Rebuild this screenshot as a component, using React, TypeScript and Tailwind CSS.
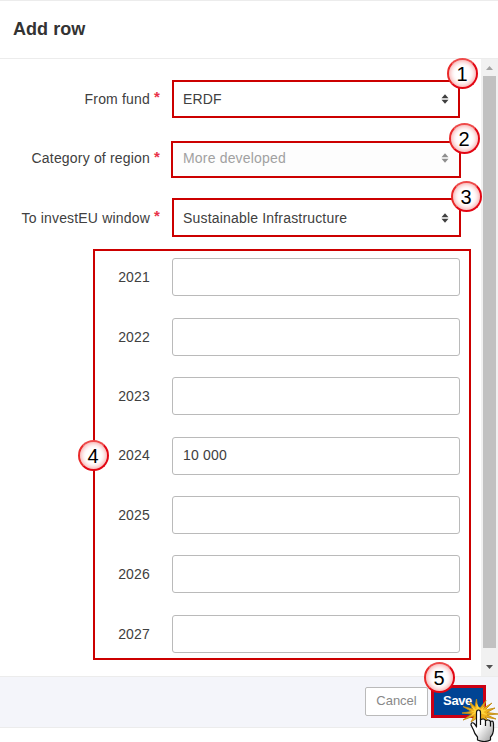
import type { ReactNode } from "react";

type SelectFieldProps = {
  label: string;
  value: string;
  step: number;
  row: string;
  frame: string;
  badge: string;
  disabled?: boolean;
};

const amounts = [
  { year: "2021", value: "", gap: "mb-[22px]" },
  { year: "2022", value: "", gap: "mb-[21px]" },
  { year: "2023", value: "", gap: "mb-[22px]" },
  { year: "2024", value: "10 000", gap: "mb-[21px]" },
  { year: "2025", value: "", gap: "mb-[21px]" },
  { year: "2026", value: "", gap: "mb-[22px]" },
  { year: "2027", value: "", gap: "" },
];

// Numbered step marker
function Badge({ children, className }: { children: ReactNode; className: string }) {
  return (
    <span
      className={`absolute z-10 flex h-[31px] w-[31px] items-center justify-center rounded-full border-2 border-[#e30613] border-t-[#ee4a4a] border-l-[#e92a2a] bg-white pr-px text-[20px] leading-none font-normal tracking-normal text-black shadow-[inset_0_0_5px_1px_#f5a3a3] ${className}`}
    >
      {children}
    </span>
  );
}

function SortArrows({ color }: { color: string }) {
  return (
    <svg width="8" height="10" viewBox="0 0 8 10" fill={color}>
      <path d="M4 .3 7.500 4.200H.5zM4 9.700.5 5.800h7z" />
    </svg>
  );
}

function SelectField({ label, value, step, row, frame, badge, disabled }: SelectFieldProps) {
  return (
    <div className={`flex items-center ${row}`}>
      <label className={`w-[150px] shrink-0 text-right ${disabled ? "pb-[3px]" : ""}`}>{label}</label>
      <span
        className={`ml-[4px] shrink-0 text-[15px] leading-none font-bold tracking-normal text-[#e8334a] ${disabled ? "pb-[7px]" : "pb-[5px]"}`}
      >
        *
      </span>
      <div className={`relative flex shrink-0 items-center justify-between border-2 border-[#cc0000] ${frame}`}>
        <span className={disabled ? "text-[#a1a1a1]" : ""}>{value}</span>
        <SortArrows color={disabled ? "#8e8e8e" : "#404040"} />
        <Badge className={badge}>{step}</Badge>
      </div>
    </div>
  );
}

// Click burst with the hand pointer on top of it
function ClickPointer() {
  return (
    <svg className="absolute top-[9px] left-[29px] z-20" width="38" height="48" viewBox="0 0 38 48">
      <defs>
        <linearGradient id="hand" x1="0" y1="0" x2="1" y2="1">
          <stop offset="0.45" stopColor="#fff" />
          <stop offset="1" stopColor="#999" />
        </linearGradient>
      </defs>
      <path
        d="M17.500 13.500 16.500 5l-1.500 8L9 7.500l3.500 7.500L3 12.500l8.500 5L2 19l10 1-9 6 11-4-3 6 6-4 4 3 1-3 9 5-6-6 11 2-9-4 11-1-11-1.500L35 14l-10 2 7-7-9 5.500 3-8-5.500 7z"
        fill="#eeb01c"
        stroke="#c28c14"
        strokeWidth="0.9"
      />
      <path d="M16.500 9v7l-5-4 3 5-6 1h6l-4 4 6-3 5 1 6 1-4-3 5-3-6 1 3-5-5 5z" fill="#ffd43b" />
      <path
        d="M16.500 33V18.500q0-2.500 2-2.500t2 2.500V26q0-1 2.500-1t2.500 2q0-1 2.500-1t2.500 2.500q0-1.500 1.500-1.500 1.500.3 1.500 3v5q0 5-3 8v3q-6 3-13 0v-3q-3-3-4-7l-2.500-5q0-3 2.500-2 1.500 1 2.500 3z"
        fill="url(#hand)"
        stroke="#111"
        strokeWidth="1.200"
        strokeLinejoin="round"
      />
      <path d="M20.500 25v6M25.500 27v5M30.500 28.500v4" fill="none" stroke="#111" strokeWidth="1.200" />
    </svg>
  );
}

export default function App() {
  return (
    <div className="flex h-[742px] w-[498px] flex-col overflow-hidden border-t border-[#ececec] bg-white font-['Liberation_Sans',Arial,sans-serif] text-[14px] leading-[20px] tracking-[0.18px] text-[#404040]">
      <header className="flex h-[58px] shrink-0 items-center border-b border-[#ececec] pb-[2px] pl-[13px]">
        <h1 className="text-[18px] font-bold tracking-[0.05px] text-[#333]">Add row</h1>
      </header>

      <main className="flex h-[617px] shrink-0">
        <form className="flex w-[481px] flex-col pt-[21px]">
          <SelectField
            label="From fund"
            value="ERDF"
            step={1}
            row="h-[38px]"
            frame="ml-auto mr-[21px] h-[38px] w-[288px] pl-[9px] pr-[9px]"
            badge="-top-[24px] -right-[20px]"
          />
          <SelectField
            label="Category of region"
            value="More developed"
            step={2}
            row="mt-[23px] h-[37px]"
            frame="ml-auto mr-[20px] h-[37px] w-[290px] bg-[#fdfdfd] pb-[3px] pl-[10px] pr-[10px]"
            badge="-top-[20px] -right-[21px]"
            disabled
          />
          <SelectField
            label="To investEU window"
            value="Sustainable Infrastructure"
            step={3}
            row="mt-[20px] h-[39px]"
            frame="ml-auto mr-[20px] h-[39px] w-[289px] pl-[9px] pr-[10px]"
            badge="-top-[19px] -right-[23px]"
          />

          <div className="relative mt-[12px] ml-[93px] h-[411px] w-[378px] border-2 border-[#cc0000] pt-[7px]">
            <Badge className="top-[189px] -left-[17px]">4</Badge>
            {amounts.map((item) => (
              <div key={item.year} className={`flex h-[38px] items-center ${item.gap}`}>
                <label className={`w-[55px] text-right ${item.value ? "pb-[2px]" : ""}`}>{item.year}</label>
                <div className="ml-[22px] flex h-[38px] w-[288px] items-center rounded-[3px] border border-[#bababa] pb-[2px] pl-[10px]">
                  {item.value}
                </div>
              </div>
            ))}
          </div>
        </form>

        {/* Scrollbar */}
        <div className="flex w-[17px] flex-col items-center bg-[#f1f1f1]">
          <svg className="shrink-0" width="17" height="17" viewBox="0 0 17 17" fill="#a3a3a3">
            <path d="M5 11h7L8.500 7z" />
          </svg>
          <div className="h-[572px] w-[13px] bg-[#c1c1c1]" />
          <svg className="mt-auto shrink-0" width="17" height="17" viewBox="0 0 17 17" fill="#505050">
            <path d="M5 6h7l-3.500 4z" />
          </svg>
        </div>
      </main>

      <footer className="flex h-[52px] shrink-0 items-start border-y border-[#ececec] bg-[#f4f5fa] pl-[365px] text-[13px]">
        <button className="mt-[10px] h-[29px] w-[63px] rounded-[2px] border border-[#bababa] bg-white pb-[2px] tracking-normal text-[#888]">
          Cancel
        </button>
        <div className="relative mt-[8px] ml-[3px] h-[33px] w-[55px]">
          <button className="h-[33px] w-[55px] border-[3px] border-[#cc0014] bg-[#004494] pr-[2px] pb-[2px] font-bold tracking-[-0.4px] text-white">
            Save
          </button>
          <Badge className="-top-[23px] -left-[7px]">5</Badge>
          <ClickPointer />
        </div>
      </footer>
    </div>
  );
}
